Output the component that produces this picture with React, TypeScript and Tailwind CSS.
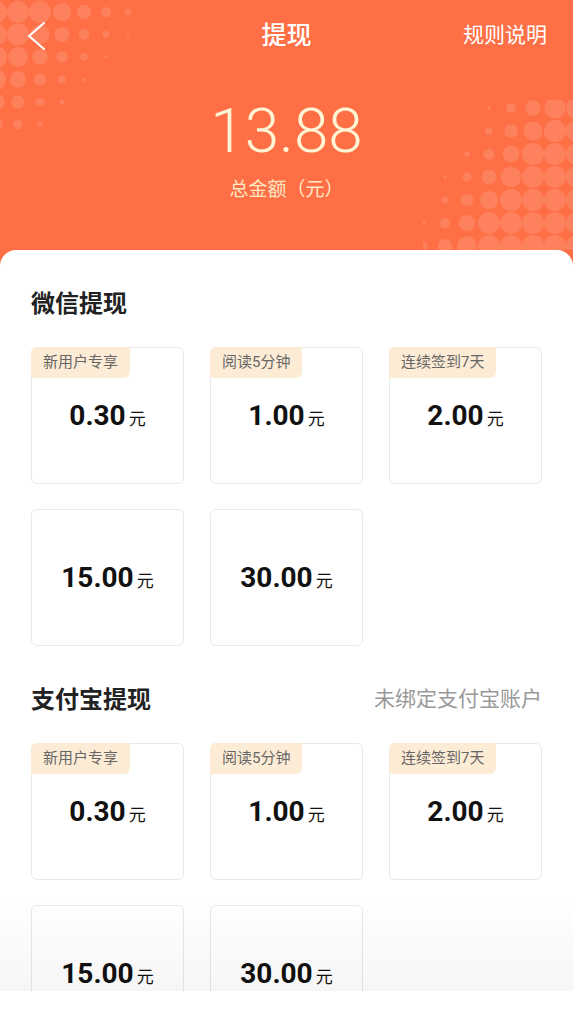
const FONT = "font-['Roboto','Noto_Sans_CJK_SC',sans-serif]"

type Option = { amount: string; tag?: string }

const options: Option[] = [
  { amount: "0.30", tag: "新用户专享" },
  { amount: "1.00", tag: "阅读5分钟" },
  { amount: "2.00", tag: "连续签到7天" },
  { amount: "15.00" },
  { amount: "30.00" },
]

// halftone dots in the header corners
function dots(corner: "tl" | "br") {
  const out: { cx: number; cy: number; r: number }[] = []
  for (let j = -1; j < 8; j++) {
    for (let i = -1; i < 9; i++) {
      if (corner == "tl") {
        const cx = 18 + 22 * i
        const cy = 12 + 22.5 * j
        const d = 0.85 * cx + 0.7 * cy
        const r = Math.min(11, 11 - Math.max(0, d - 45) * 0.11)
        if (r > 1.2) out.push({ cx, cy, r })
      } else {
        const cx = 150 - (18 + 22 * i)
        const cy = 150 - (4 + 23 * j)
        const d = 1.0 * (150 - cx) + 0.6 * (150 - cy)
        const r = Math.min(11, 11 - Math.max(0, d - 100) * 0.13)
        if (r > 1.2) out.push({ cx, cy, r })
      }
    }
  }
  return out
}

function Card({ option }: { option: Option }) {
  return (
    <div className="relative h-[137px] rounded-[6px] border border-[#e9e9e9] bg-white flex items-center justify-center">
      {option.tag && (
        <div className="absolute -top-px -left-px h-[31px] px-[12px] flex items-center rounded-tl-[6px] rounded-br-[6px] bg-[#fdecd5] text-[15px] text-[#666]">
          {option.tag}
        </div>
      )}
      <div className="flex items-baseline text-[#111]">
        <span className="text-[28px] font-bold leading-none">{option.amount}</span>
        <span className="ml-[3px] text-[17px] leading-none">元</span>
      </div>
    </div>
  )
}

function Section({ title, extra }: { title: string; extra?: string }) {
  return (
    <div className="flex flex-col">
      <div className="h-[44px] flex items-center justify-between">
        <h2 className="text-[24px] font-bold text-[#222]">{title}</h2>
        {extra && <span className="text-[21px] text-[#999]">{extra}</span>}
      </div>
      <div className="mt-[21px] grid grid-cols-3 gap-x-[26px] gap-y-[25px]">
        {options.map((o) => (
          <Card key={o.amount} option={o} />
        ))}
      </div>
    </div>
  )
}

export default function App() {
  return (
    <div className={`${FONT} min-h-screen bg-white`}>
      <div className="relative h-[266px] bg-[#fe6f46] overflow-hidden">
        <svg className="absolute left-0 top-0" width="160" height="130" viewBox="0 0 160 130">
          {dots("tl").map((c, i) => (
            <circle key={i} cx={c.cx} cy={c.cy} r={c.r} fill="rgba(255,255,255,0.13)" />
          ))}
        </svg>
        <svg className="absolute right-0 top-[100px]" width="150" height="150" viewBox="0 0 150 150">
          {dots("br").map((c, i) => (
            <circle key={i} cx={c.cx} cy={c.cy} r={c.r} fill="rgba(255,255,255,0.13)" />
          ))}
        </svg>

        <div className="relative h-[72px] flex items-center justify-between pl-[27px] pr-[26px]">
          <svg width="20" height="30" viewBox="0 0 20 30" fill="none">
            <polyline points="17,2 2,15 17,28" stroke="white" strokeWidth="2.2" strokeLinecap="round" strokeLinejoin="round" />
          </svg>
          <span className="absolute left-1/2 -translate-x-1/2 text-[25px] font-medium text-white">提现</span>
          <span className="text-[21px] text-white">规则说明</span>
        </div>

        <div className="relative flex flex-col items-center">
          <div className="mt-[28px] text-[62px] font-light leading-none text-[#fff4d4]">13.88</div>
          <div className="mt-[18px] text-[19px] leading-none text-[#ffe9c4]">总金额（元）</div>
        </div>
      </div>

      <div className="relative -mt-[16px] rounded-t-[16px] bg-white px-[31px] pt-[32px] pb-[40px] flex flex-col gap-[32px]">
        <Section title="微信提现" />
        <Section title="支付宝提现" extra="未绑定支付宝账户" />
      </div>

      <div className="fixed inset-x-0 bottom-[33px] h-[96px] bg-gradient-to-b from-transparent to-[rgba(0,0,0,0.035)] pointer-events-none" />
      <div className="fixed inset-x-0 bottom-0 h-[33px] bg-white" />
    </div>
  )
}
